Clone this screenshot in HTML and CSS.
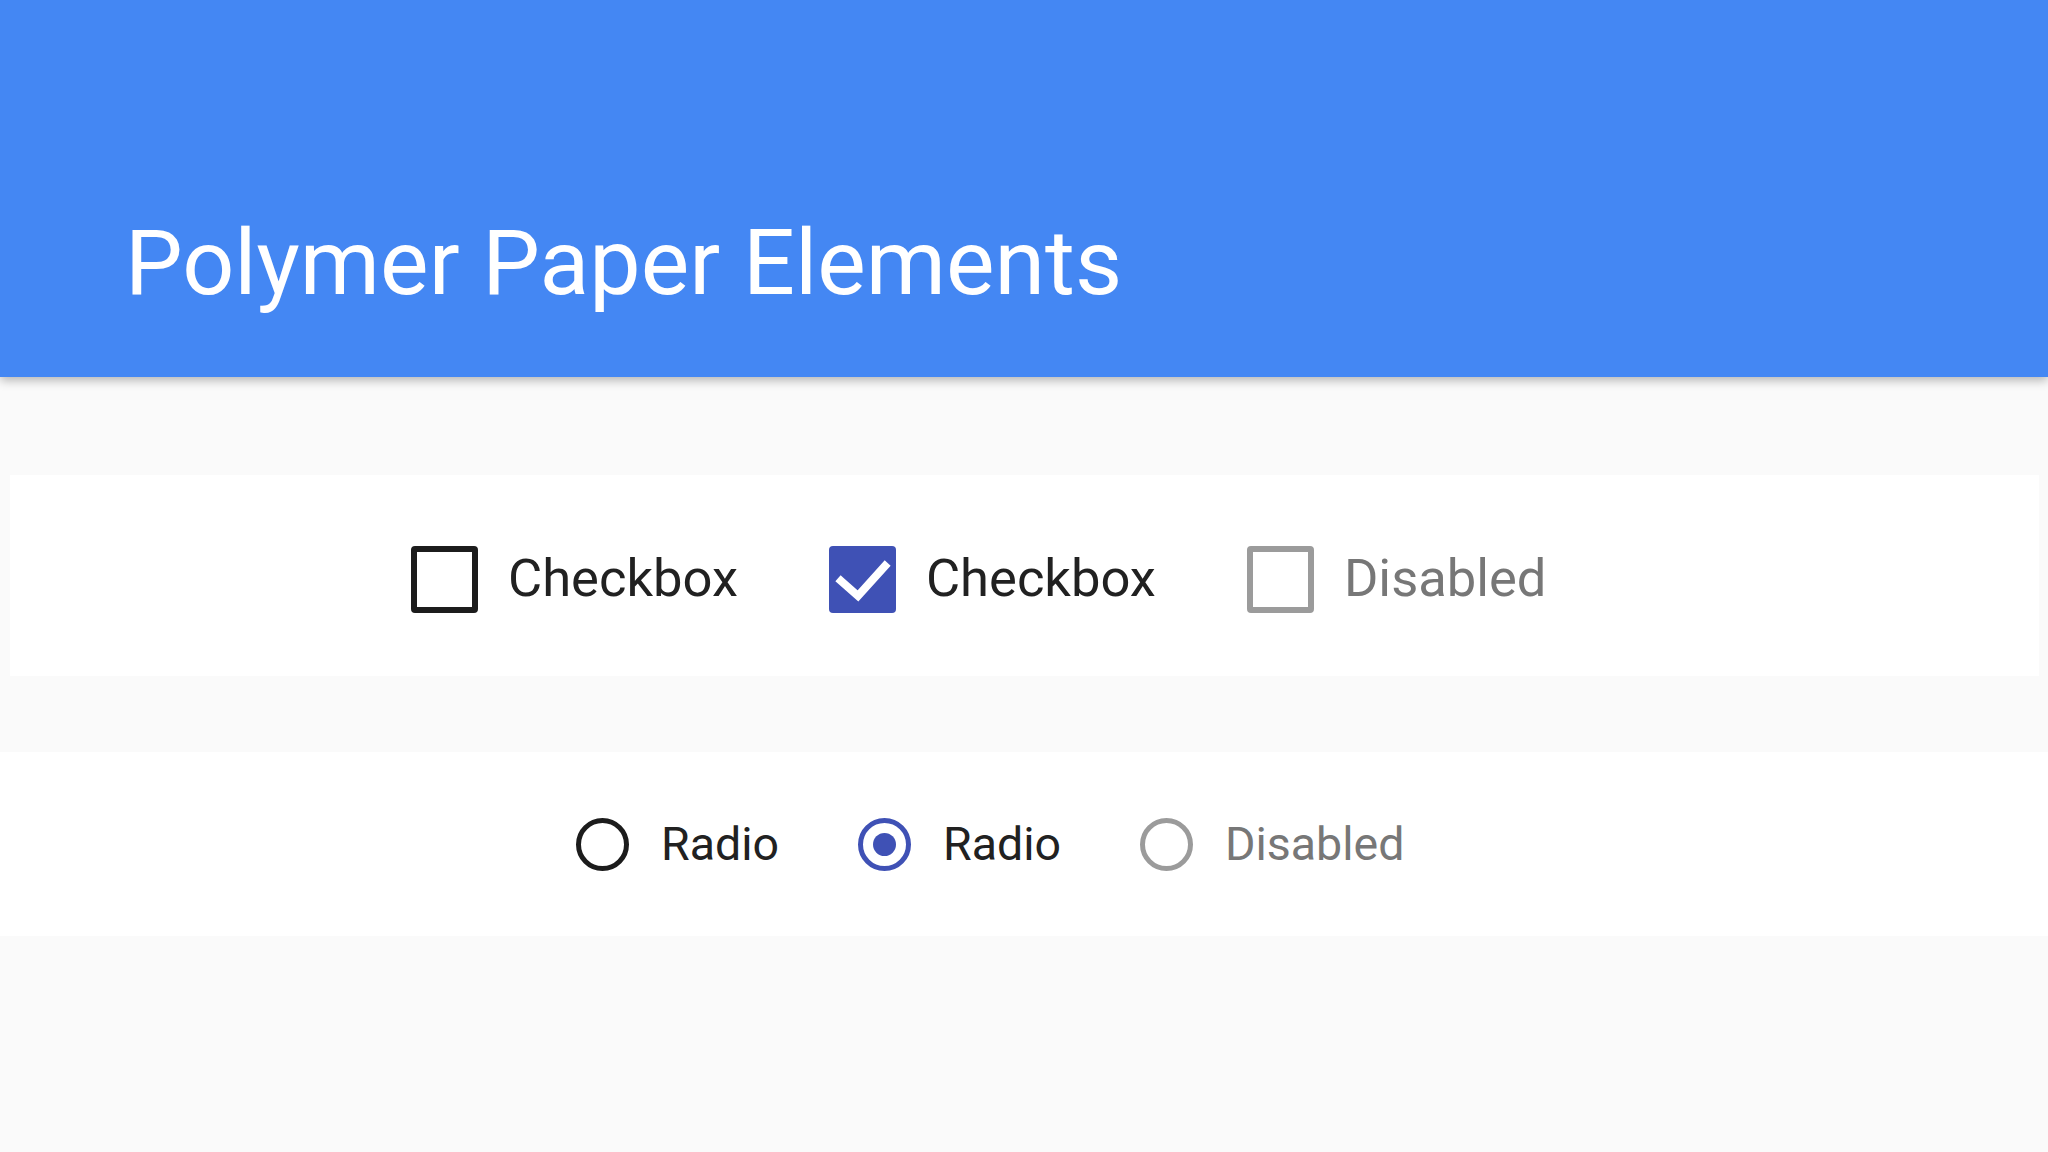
FILE: index.html
```html
<!DOCTYPE html>
<html lang="en">
<head>
<meta charset="utf-8">
<title>Polymer Paper Elements</title>
<link rel="stylesheet" href="styles.css">
</head>
<body>
<header class="toolbar">
  <h1 class="title">Polymer Paper Elements</h1>
</header>
<main class="content">
  <section class="card card-checks">
    <div class="item check-item">
      <span class="checkbox"></span>
      <span class="label">Checkbox</span>
    </div>
    <div class="item check-item">
      <span class="checkbox checked">
        <svg class="checkmark" viewBox="0 0 66 66" width="66" height="66"><polyline points="12,34 29,49 56,19" fill="none" stroke="#ffffff" stroke-width="8" stroke-linecap="square"/></svg>
      </span>
      <span class="label">Checkbox</span>
    </div>
    <div class="item check-item disabled">
      <span class="checkbox"></span>
      <span class="label">Disabled</span>
    </div>
  </section>
  <section class="card card-radios">
    <div class="item radio-item">
      <span class="radio"></span>
      <span class="label">Radio</span>
    </div>
    <div class="item radio-item">
      <span class="radio checked"><span class="dot"></span></span>
      <span class="label">Radio</span>
    </div>
    <div class="item radio-item disabled">
      <span class="radio"></span>
      <span class="label">Disabled</span>
    </div>
  </section>
</main>
</body>
</html>
```
FILE: styles.css
```css
html, body {
  margin: 0;
  padding: 0;
}
body {
  width: 2048px;
  height: 1152px;
  overflow: hidden;
  background: #fafafa;
  font-family: Roboto, "Liberation Sans", sans-serif;
  color: #212121;
}
.toolbar {
  height: 377px;
  background: #4487f3;
  box-shadow: 0 3px 10px rgba(0, 0, 0, 0.3);
  position: relative;
  z-index: 1;
  display: flex;
  align-items: flex-end;
  box-sizing: border-box;
  padding: 0 0 69px 125px;
}
.title {
  margin: 0;
  font-weight: 400;
  font-size: 91.5px;
  line-height: 1;
  color: #ffffff;
}
.content {
  padding-top: 98px;
  display: flex;
  flex-direction: column;
  gap: 76px;
}
.card {
  background: #ffffff;
  display: flex;
  align-items: center;
  box-sizing: border-box;
}
.card-checks {
  height: 201px;
  margin: 0 9px 0 10px;
  padding-left: 401px;
  padding-top: 8px;
  gap: 91px;
}
.card-radios {
  height: 184px;
  padding-left: 576px;
  gap: 79px;
}
.check-item {
  display: flex;
  align-items: center;
  gap: 30px;
}
.radio-item {
  display: flex;
  align-items: center;
  gap: 32px;
}
.check-item .label {
  font-size: 52.5px;
  line-height: 1;
  padding-bottom: 2px;
}
.radio-item .label {
  font-size: 46.5px;
  line-height: 1;
}
.checkbox {
  width: 67px;
  height: 67px;
  box-sizing: border-box;
  border: 6px solid #1c1c1c;
  border-radius: 4px;
  display: flex;
  align-items: center;
  justify-content: center;
}
.checkbox.checked {
  background: #3f51b5;
  border-color: #3f51b5;
  border-width: 0;
}
.checkmark {
  display: block;
}
.radio {
  width: 53px;
  height: 53px;
  box-sizing: border-box;
  border: 5px solid #1c1c1c;
  border-radius: 50%;
  display: flex;
  align-items: center;
  justify-content: center;
}
.radio.checked {
  border-color: #3f51b5;
}
.dot {
  width: 23px;
  height: 23px;
  border-radius: 50%;
  background: #3f51b5;
}
.disabled .checkbox,
.disabled .radio {
  border-color: #9b9b9b;
}
.disabled .label {
  color: #777777;
}
```
